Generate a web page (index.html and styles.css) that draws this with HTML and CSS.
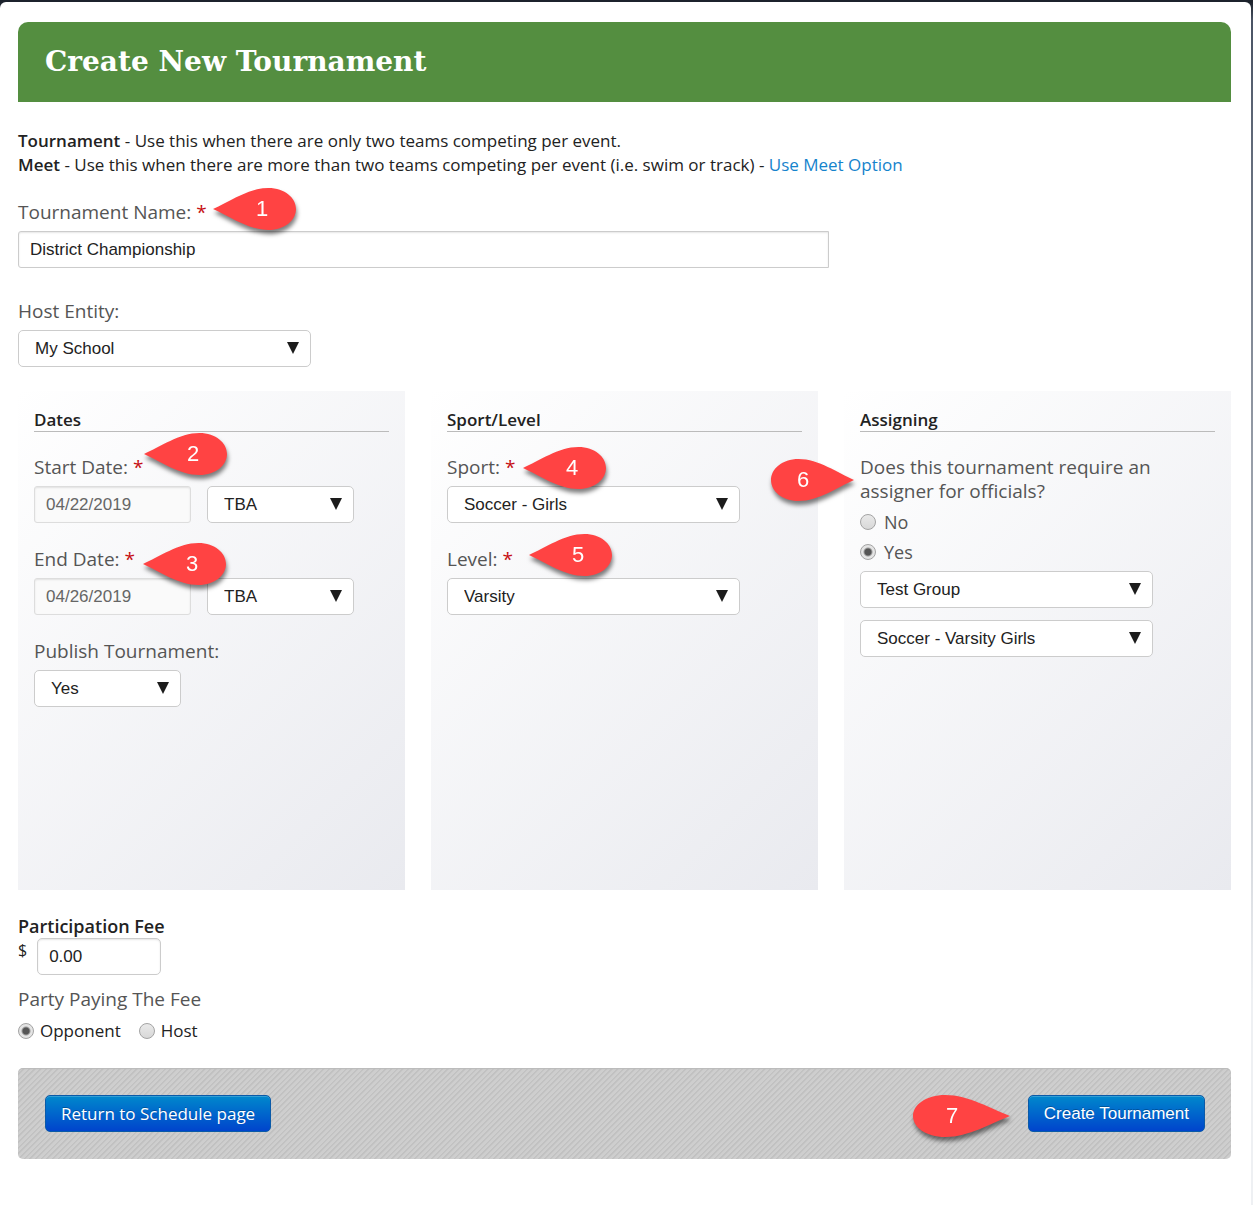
FILE: index.html
```html
<!DOCTYPE html>
<html lang="en">
<head>
<meta charset="utf-8">
<meta name="viewport" content="width=device-width, initial-scale=1">
<title>Create New Tournament</title>
<link rel="stylesheet" href="styles.css">
</head>
<body>
<svg class="sprite" aria-hidden="true">
  <symbol id="drop" viewBox="0 0 84 42" preserveAspectRatio="none">
    <path d="M0 21C16 14 36 0 56 0C73 0 84 10 84 21C84 32 73 42 56 42C36 42 16 28 0 21Z"/>
  </symbol>
</svg>
<main class="page">
  <header class="banner"><h1>Create New Tournament</h1></header>
  <form class="form">
    <p class="intro"><strong>Tournament</strong> - Use this when there are only two teams competing per event.<br>
    <strong>Meet</strong> - Use this when there are more than two teams competing per event (i.e. swim or track) - <a href="#">Use Meet Option</a></p>

    <div class="field field-name">
      <label for="name">Tournament Name: <span class="req">*</span></label>
      <input class="text" id="name" type="text" value="District Championship">
      <span class="marker marker-1"><svg><use href="#drop"/></svg><b>1</b></span>
    </div>

    <div class="field field-host">
      <label for="host">Host Entity:</label>
      <span class="select select-wide"><select id="host"><option>My School</option></select></span>
    </div>

    <div class="panels">
      <section class="panel">
        <h2>Dates</h2>
        <div class="field">
          <label for="start">Start Date: <span class="req">*</span></label>
          <div class="pair">
            <input class="text date" id="start" type="text" value="04/22/2019" readonly>
            <span class="select select-small"><select aria-label="Start time"><option>TBA</option></select></span>
          </div>
          <span class="marker marker-2"><svg><use href="#drop"/></svg><b>2</b></span>
        </div>
        <div class="field">
          <label for="end">End Date: <span class="req">*</span></label>
          <div class="pair">
            <input class="text date" id="end" type="text" value="04/26/2019" readonly>
            <span class="select select-small"><select aria-label="End time"><option>TBA</option></select></span>
          </div>
          <span class="marker marker-3"><svg><use href="#drop"/></svg><b>3</b></span>
        </div>
        <div class="field">
          <label for="publish">Publish Tournament:</label>
          <span class="select select-small"><select id="publish"><option>Yes</option></select></span>
        </div>
      </section>

      <section class="panel">
        <h2>Sport/Level</h2>
        <div class="field">
          <label for="sport">Sport: <span class="req">*</span></label>
          <span class="select select-wide"><select id="sport"><option>Soccer - Girls</option></select></span>
          <span class="marker marker-4"><svg><use href="#drop"/></svg><b>4</b></span>
        </div>
        <div class="field">
          <label for="level">Level: <span class="req">*</span></label>
          <span class="select select-wide"><select id="level"><option>Varsity</option></select></span>
          <span class="marker marker-5"><svg><use href="#drop"/></svg><b>5</b></span>
        </div>
      </section>

      <section class="panel">
        <h2>Assigning</h2>
        <fieldset class="assign">
          <legend>Does this tournament require an assigner for officials?</legend>
          <label class="choice"><input type="radio" name="assigner">No</label>
          <label class="choice"><input type="radio" name="assigner" checked>Yes</label>
          <span class="select select-wide"><select aria-label="Assigning group"><option>Test Group</option></select></span>
          <span class="select select-wide"><select aria-label="Assigned sport"><option>Soccer - Varsity Girls</option></select></span>
          <span class="marker marker-flip marker-6"><svg><use href="#drop"/></svg><b>6</b></span>
        </fieldset>
      </section>
    </div>

    <section class="fee">
      <label class="fee-title" for="fee">Participation Fee</label>
      <div class="fee-row"><span>$</span><input class="text fee-input" id="fee" type="text" value="0.00"></div>
      <fieldset class="payer">
        <legend>Party Paying The Fee</legend>
        <label><input type="radio" name="payer" checked>Opponent</label>
        <label><input type="radio" name="payer">Host</label>
      </fieldset>
    </section>

    <footer class="actions">
      <button class="button button-return" type="button">Return to Schedule page</button>
      <div class="submit">
        <span class="marker marker-flip marker-7"><svg><use href="#drop"/></svg><b>7</b></span>
        <button class="button" type="submit">Create Tournament</button>
      </div>
    </footer>
  </form>
</main>
</body>
</html>
```
FILE: styles.css
```css
* {
  box-sizing: border-box;
}

body {
  margin: 0;
  padding: 2px 2px 0 0;
  background: linear-gradient(to bottom, #1c222c 2px, #4a5465 20px, #7d8592 300px, #eef0f3 1000px);
  color: #222;
  font: 17px/24px "Open Sans", "Noto Sans", sans-serif;
}

.sprite {
  display: none;
}

.page {
  min-height: calc(100vh - 2px);
  padding: 20px 20px 46px 18px;
  border-radius: 6px 6px 0 0;
  background: #fff;
}

.banner {
  padding: 20px 27px;
  border-radius: 10px 10px 0 0;
  background: #548e40;
}

h1 {
  margin: 0;
  color: #fff;
  font: bold 28px/40px "DejaVu Serif", serif;
}

.intro {
  margin: 27px 0 23px;
}

a {
  color: #1583cc;
  text-decoration: none;
}

strong {
  font-weight: 600;
}

.field {
  position: relative;
  display: flex;
  flex-direction: column;
  align-items: flex-start;
  gap: 7px;
  margin-bottom: 24px;
  color: #555;
  font-size: 19px;
}

.field-name {
  margin-bottom: 31px;
}

.req {
  color: #c60f13;
}

.text,
select {
  height: 37px;
  border: 1px solid #ccc;
  border-radius: 5px;
  background: #fff;
  color: #222;
  font: 17px "Liberation Sans", Arial, sans-serif;
}

.text {
  padding: 0 11px;
  box-shadow: inset 0 1px 2px rgba(0, 0, 0, 0.1);
}

.field-name .text {
  width: 811px;
  max-width: 100%;
  border-radius: 3px 0 0 3px;
}

.text.date {
  width: 157px;
  border-color: #ddd;
  border-radius: 3px;
  background: #fafafa;
  color: #666;
}

.select {
  position: relative;
  display: block;
}

.select select {
  width: 100%;
  display: block;
  padding: 0 16px;
  appearance: none;
}

.select::after {
  content: "";
  position: absolute;
  top: 12px;
  right: 12px;
  width: 12px;
  height: 12px;
  background: #1c1c1c;
  clip-path: polygon(0 0, 100% 0, 50% 100%);
  pointer-events: none;
}

.select-wide {
  width: 293px;
}

.select-small {
  width: 147px;
}

.pair {
  display: flex;
  gap: 16px;
}

.panels {
  display: grid;
  grid-template-columns: repeat(3, 1fr);
  gap: 26px;
}

.panel {
  min-height: 499px;
  padding: 17px 16px;
  background: linear-gradient(135deg, #fff, #e9eaef);
}

h2 {
  margin: 0 0 23px;
  border-bottom: 1px solid #bbb;
  font-size: 17px;
  font-weight: 600;
  line-height: 23px;
}

fieldset {
  position: relative;
  min-width: 0;
  margin: 0;
  padding: 0;
  border: 0;
}

legend {
  padding: 0;
  color: #555;
  font-size: 19px;
}

.assign {
  color: #555;
  font-size: 18px;
}

.assign legend {
  padding-bottom: 1px;
}

.assign .choice {
  display: flex;
  align-items: center;
  gap: 8px;
  margin-top: 6px;
}

.assign .select {
  margin-top: 7px;
}

.assign .select + .select {
  margin-top: 12px;
}

input[type="radio"] {
  flex: none;
  width: 16px;
  height: 16px;
  margin: 0;
  border: 1px solid #a3a3a3;
  border-radius: 50%;
  background: linear-gradient(#e9e9e9, #d8d8d8);
  appearance: none;
}

input[type="radio"]:checked {
  background: radial-gradient(circle, #555 0 3px, #e4e4e4 5px);
}

.fee {
  padding: 24px 0 25px;
}

.fee-title {
  display: block;
  font-size: 18px;
  font-weight: 600;
}

.fee-row {
  display: flex;
  gap: 10px;
  font-size: 16px;
}

.fee-input {
  width: 124px;
}

.payer {
  display: flex;
  gap: 18px;
  margin-top: 12px;
}

.payer legend {
  margin-bottom: 8px;
}

.payer label {
  display: flex;
  align-items: center;
  gap: 6px;
}

.actions {
  display: flex;
  justify-content: space-between;
  padding: 27px 26px 27px 27px;
  border-radius: 5px;
  background: repeating-linear-gradient(135deg, #c1c1c1 0 1px, #cecece 2px 4px);
  box-shadow: inset 0 1px 1px #bbb;
}

.submit {
  position: relative;
}

.button {
  height: 37px;
  padding: 0 15px;
  border: 1px solid #0a5aa8;
  border-radius: 5px;
  background: linear-gradient(#0088cc, #0044cc);
  box-shadow: inset 0 1px 0 rgba(255, 255, 255, 0.2);
  color: #fff;
  font: 17px "Liberation Sans", Arial, sans-serif;
  text-shadow: 0 -1px 0 rgba(0, 0, 0, 0.25);
}

.button-return {
  font-family: "Open Sans", "Noto Sans", sans-serif;
}

/* numbered callouts that float over the form */
.marker {
  position: absolute;
  z-index: 1;
  display: grid;
  width: 83px;
  height: 42px;
  color: #fff;
  filter: drop-shadow(1px 4px 2px rgba(0, 0, 0, 0.5));
  pointer-events: none;
}

.marker svg,
.marker b {
  grid-area: 1 / 1;
}

.marker svg {
  width: 100%;
  height: 100%;
  fill: #ff4343;
}

.marker b {
  z-index: 1;
  padding-left: 15px;
  font: 22px/42px "Liberation Sans", Arial, sans-serif;
  text-align: center;
}

.marker-flip svg {
  transform: scaleX(-1);
}

.marker-flip b {
  padding: 0 19px 0 0;
}

.marker-1 { left: 195px; top: -12px; }
.marker-2 { left: 110px; top: -22px; }
.marker-3 { left: 109px; top: -4px; }
.marker-4 { left: 76px; top: -8px; }
.marker-5 { left: 82px; top: -13px; }
.marker-6 { left: -89px; top: -45px; }
.marker-7 { right: 195px; top: 0; width: 97px; }
```
